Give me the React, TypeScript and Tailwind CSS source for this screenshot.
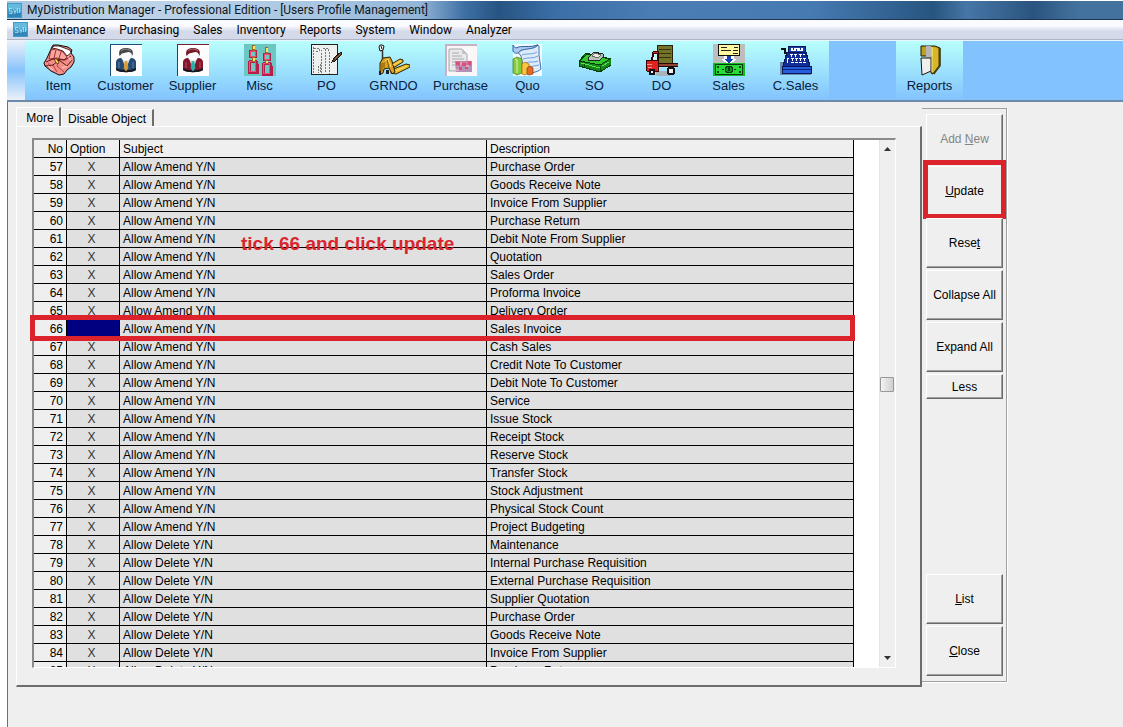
import type { ReactNode } from 'react'
import clsx from 'clsx'

// ── Data ───────────────────────────────────────────────────────────────────

const MENUS = ['Maintenance', 'Purchasing', 'Sales', 'Inventory', 'Reports', 'System', 'Window', 'Analyzer']

const AMEND = [
  'Purchase Order', 'Goods Receive Note', 'Invoice From Supplier', 'Purchase Return',
  'Debit Note From Supplier', 'Quotation', 'Sales Order', 'Proforma Invoice', 'Delivery Order',
  'Sales Invoice', 'Cash Sales', 'Credit Note To Customer', 'Debit Note To Customer', 'Service',
  'Issue Stock', 'Receipt Stock', 'Reserve Stock', 'Transfer Stock', 'Stock Adjustment',
  'Physical Stock Count', 'Project Budgeting',
]

const REMOVE = [
  'Maintenance', 'Internal Purchase Requisition', 'External Purchase Requisition',
  'Supplier Quotation', 'Purchase Order', 'Goods Receive Note', 'Invoice From Supplier',
  'Purchase Return',
]

const FIRST_NO = 57
const SELECTED_NO = 66

const ROWS = [
  ...AMEND.map((description) => ({ subject: 'Allow Amend Y/N', description })),
  ...REMOVE.map((description) => ({ subject: 'Allow Delete Y/N', description })),
].map((row, i) => ({ ...row, no: FIRST_NO + i }))

// ── Icons ──────────────────────────────────────────────────────────────────

function AppIcon() {
  return (
    <svg viewBox="0 0 15 15" className="h-[15px] w-[15px] shrink-0" aria-hidden="true">
      <rect width="15" height="15" fill="#3f9bc9" />
      <rect x="1" y="1" width="13" height="5" fill="#66bbdd" />
      <rect x="1" y="10" width="13" height="4" fill="#3186b8" />
      <path
        d="M5 5.500H2.500V8H5v2.500H2M6.500 6l1.500 3.500M9.500 6 7.500 11M10.500 5v5M12.500 5v5M12.500 7.500H14"
        fill="none"
        stroke="#c3e9f5"
        strokeWidth="0.7"
      />
    </svg>
  )
}

function Glyph({ children, crisp = true }: { children: ReactNode; crisp?: boolean }) {
  return (
    <svg
      viewBox="0 0 32 32"
      className="h-8 w-8 shrink-0"
      shapeRendering={crisp ? 'crispEdges' : 'auto'}
      aria-hidden="true"
    >
      {children}
    </svg>
  )
}

function ItemIcon() {
  return (
    <Glyph crisp={false}>
      <path
        d="M8 5 10 1h5l10 2 4 3-1 3 3 4v5l-3 5-4 3-3 4-5 1-8-4-6-5-1-3 3-5z"
        fill="#f38e88"
        stroke="#1a0808"
      />
      <path d="m9 4 2-2h5l11 4 1 3-4 3-4-5-6-2z" fill="#fff" stroke="#1a0808" strokeWidth="0.8" />
      <path d="m8 6 5-1 7 3 4 5-3 3-7-2-8 1z" fill="#f9a49c" stroke="#7a1d1d" strokeWidth="0.8" />
      <path d="m13 6-2 8M18 8l-2 6" fill="none" stroke="#a03030" />
      <path d="m3 18 7-3 12 1 6-4M2 22l8-1 6-5 8 6 5-6" fill="none" stroke="#5b1414" />
      <path d="m10 21 4 7M16 17l-2 5 7 6M6 19l-1 5" fill="none" stroke="#a03030" strokeWidth="0.8" />
      <path d="m11 15 3 5 2-1-2-4z" fill="#ffdc4a" stroke="#4d1b0b" strokeWidth="0.7" />
      <path d="m5 22 5 4M19 24l5-2M25 12l3 5" stroke="#ffd0ca" />
    </Glyph>
  )
}

function PersonIcon({ coat, tie, hair, edge }: { coat: string; tie: string; hair: string; edge: string }) {
  return (
    <Glyph crisp={false}>
      <rect width="32" height="32" fill="#fdfdfd" />
      <path d="M0 32V0h32" fill="none" stroke={edge} strokeWidth="2" />
      <path d="M6 26V18c0-2 2-4 5-4h10c3 0 5 2 5 4v8c-4 3-16 3-20 0z" fill={coat} />
      <path d="M6 24c5 3 15 3 20 0v2c-4 3-16 3-20 0z" fill="#16181f" />
      <path d="m12 14 4 12 4-12z" fill="#eee" />
      <path d="m15 17-1 7 2 3 2-3-1-7z" fill={tie} stroke={tie} strokeWidth="0.7" />
      <ellipse cx="16" cy="11" rx="5.500" ry="6" fill="#fafafa" stroke="#ccc" strokeWidth="0.5" />
      <path d="M9.500 12C8 6 11 4 16 4s8 2 6.500 8c-1-3-2-4-4-4-3 1-6 0-9 4z" fill={hair} />
      <path d="M11 7c3-3 8-2 10 0" fill="none" stroke="#aaa" strokeWidth="0.7" />
      <path d="M9 18v6M23 18v6" stroke="#fff" strokeOpacity="0.3" />
    </Glyph>
  )
}

function MiscIcon() {
  return (
    <Glyph>
      <rect width="32" height="32" fill="#6cc7c3" />
      <g fill="none">
        <path d="M6 7h6v6H6zM20 10h6v6h-6z" stroke="#a9204a" strokeWidth="2" />
        <path d="M6 7h5v5H6zM20 10h5v5h-5z" stroke="#ee4a78" />
        <path d="M6 17h6l1 3v8H5v-8zM20 19h6l1 3v8h-8v-8z" stroke="#b51f4a" strokeWidth="3" />
        <path d="M6 17h5v10H5v-8zM20 19h5v10h-6v-8z" stroke="#f04d7c" />
        <path d="M9.500 1v6M9.500 13v5M22.500 3v7M22.500 16v4" stroke="#9a6a14" strokeWidth="3" />
        <path d="M9.500 2v3M9.500 14v3M22.500 4v4M22.500 17v2" stroke="#ffe46e" strokeWidth="2" />
      </g>
    </Glyph>
  )
}

function OrderSheetIcon() {
  return (
    <Glyph>
      <path d="M0.500 0.500h26v30H0.500z" fill="#eeefef" stroke="#222" />
      <path
        d="M2.500 3v27M3 4h5v3h-4M10.500 9v20M10 7l3-3h3l2 3v23M9.500 20v9M7.500 22v7M14.500 5v24"
        fill="none"
        stroke="#777"
        strokeDasharray="2 1"
      />
      <path d="m21 18 2-4 7-6 1 2-7 7z" fill="#5c4030" stroke="#20150d" />
      <path d="m24 15 6-6" stroke="#8b6749" />
    </Glyph>
  )
}

function PalletJackIcon() {
  return (
    <Glyph crisp={false}>
      <path d="M2 1 1 3l1 4 3-1 1-4-2-1z" fill="#fff" stroke="#111" />
      <path d="M4 5 3 2" stroke="#111" />
      <path d="M4.500 6v13" stroke="#333" strokeWidth="1.500" />
      <path d="m12 21 10-6 3 1v2l-10 6z" fill="#efb92c" stroke="#2e2203" />
      <path d="m13 26 15-6 4 1v2L18 30l-5-1z" fill="#efb92c" stroke="#2e2203" />
      <path d="M2 28v-9l3-5 7-1 2 4 3 11-3 2-3-6-5 1-1 4-2 1z" fill="#dda020" stroke="#2e2203" />
      <path d="M6 16v8M9 15l2 9M4 19v8" fill="none" stroke="#7a5908" />
      <path d="m5 18 5-3 3 8M15 21l8-4M18 27l11-5" fill="none" stroke="#ffe168" />
      <path d="M1 27h2v4H1zM8 26h3v4H8z" fill="#222" />
    </Glyph>
  )
}

function PurchaseIcon() {
  return (
    <Glyph crisp={false}>
      <rect width="32" height="32" fill="#fbf7f9" />
      <path d="M1 32V1h31" fill="none" stroke="#cbb0c2" strokeWidth="2" />
      <path d="M4 5h13l5 5v17H4z" fill="#e9e9eb" stroke="#a5a5a9" />
      <path d="M17 5v5h5z" fill="#c4c4c8" />
      <path d="M7 9h7M7 12h10M7 15h12M7 18h5M7 21h4" stroke="#aaaab0" />
      <path d="M10 17h17v11H11z" fill="#c87c9f" />
      <path d="M11 22h16v6H11z" fill="#b492b7" />
      <path d="M11 18h4v3h-4zM17 19h4v3h-4zM23 17h3v4h-3zM14 23h3v3h-3zM20 23h3v2h-3z" fill="#d94f7c" />
      <path d="M15 18h2v3h-2zM21 21h3v2h-3zM11 25h3v2h-3z" fill="#dea5bd" />
    </Glyph>
  )
}

function QuoIcon() {
  return (
    <Glyph crisp={false}>
      <rect x="1" width="29" height="32" fill="#f2f9ff" />
      <path d="M5 7c2-3 15-3 20-6l2 1v9l2 14c-4 4-12 4-17 4L9 12z" fill="#dceafa" stroke="#4671a8" />
      <path d="M1 1v6c1 3 6 3 7 0 5-3 14-1 18-6C18 4 9 1 4 4 3 3 2 3 1 1z" fill="#a9c9ef" stroke="#2f629f" />
      <path d="M10 11c5-2 10 0 15-3M11 15c5-2 10 0 15-3M13 19c5-2 9 0 13-2M17 23l10-2" fill="none" stroke="#6fa2dc" />
      <path d="m1 15 4-2 5 2v14l-5 2-4-2z" fill="#83cc3b" stroke="#447d1f" strokeWidth="0.7" />
      <path d="m3 15 2 1v13" fill="none" stroke="#dcf5b8" />
      <path d="m10 20 3-2 4 2v9l-4 2-3-1z" fill="#f6c63d" stroke="#a9641a" strokeWidth="0.7" />
      <path d="m15 24 3-2 3 2v6l-4 1-2-1z" fill="#e56b25" stroke="#913710" strokeWidth="0.7" />
    </Glyph>
  )
}

function MoneyIcon() {
  return (
    <Glyph>
      <path d="m0 17 7-8 25 6v6l-11 7L0 22z" fill="#138a17" stroke="#063c07" />
      <path d="m1 17 7-7 23 5-10 6z" fill="#2fc82d" stroke="#063c07" />
      <path d="M21 22v5M5 18v5" stroke="#064b08" />
      <path d="m9 14 6-6 9 2v3l-4 4-11-1z" fill="#b9c2b6" stroke="#222" />
      <path d="m13 12 3-3 6 2-3 3z" fill="#e8ece6" stroke="#666d62" />
      <path d="m2 19 19 5M23 22l7-4" stroke="#58e153" />
    </Glyph>
  )
}

function TruckIcon() {
  return (
    <Glyph>
      <path d="M9 27h18l-3 5H11z" fill="#a8b4b8" />
      <path d="M11.500 1.500h15v18h-15z" fill="#74732a" stroke="#25250b" />
      <path d="M13 5.500h12M13 9.500h12M13 13.500h12" stroke="#34330e" />
      <path d="M11 19.500h21v3H11z" fill="#914434" stroke="#250a05" />
      <path d="M5.500 16 7 8l2-1h3v20H1l-1-3v-7z" fill="#dd2420" stroke="#360403" />
      <path d="m6 16 2-7h3v7z" fill="#c8f7f8" stroke="#360403" />
      <path d="M1 20.500h5M2 23.500h4" stroke="#ff928d" />
      <circle cx="6" cy="28" r="2.500" fill="#eee" stroke="#111" strokeWidth="2" />
      <circle cx="25" cy="27" r="3.500" fill="#eee" stroke="#111" strokeWidth="2" />
    </Glyph>
  )
}

function SalesIcon() {
  return (
    <Glyph>
      <rect width="32" height="32" fill="#bdbdbd" />
      <path d="M5.500 0.500h21v11h-21z" fill="#fff6a0" stroke="#111" />
      <path d="M8 3.500h6M21 3.500h4M8 6.500h10M20 6.500h5M20 9.500h5" stroke="#222" />
      <path d="M11 12h10v3h3l-8 6-8-6h3z" fill="#fff" />
      <path d="M14 12h4v3h3l-5 4-5-4h3z" fill="#183fb5" />
      <path d="M0 19h32v13H0z" fill="#12ba25" />
      <path d="M2.500 20.500h27v10h-27z" fill="#27dc34" stroke="#063c0b" />
      <circle cx="16" cy="25.500" r="3.500" fill="#11942a" stroke="#063c0b" />
      <path d="M15 23h2v4h-2zM4 22h2v2H4zM26 22h2v2h-2zM4 27h2v2H4zM26 27h2v2h-2zM9 25h2v1H9zM21 25h2v1h-2z" fill="#073e0a" />
    </Glyph>
  )
}

function TypewriterIcon() {
  return (
    <Glyph>
      <path d="M0 18h5v10h26v3H0z" fill="#6c8cae" />
      <path d="M1 4.500h4v4h4" fill="none" stroke="#111" strokeWidth="2" />
      <path d="M9 2h16l1 7H8z" fill="#1c3ca6" stroke="#08175a" />
      <path d="M11 4h12v3H11z" fill="#fff" />
      <path d="M13.500 4v2M16.500 5v2M20.500 4v2" stroke="#142d87" />
      <path d="M7 8h19l4 14H3z" fill="#122c98" stroke="#08175a" />
      <path
        d="M10 10.500h3M14 10.500h3M19 10.500h3M23 10.500h2M11.500 10v3M15.500 10v3M20.500 10v3M7 14.500h2M11 14.500h3M15 14.500h3M19 14.500h3M23 14.500h3M7.500 14v5M12.500 14v3M16.500 14v3M20.500 14v3M24.500 14v3M11 18.500h3M15 18.500h3M19 18.500h3M23 18.500h3"
        stroke="#fff"
      />
      <path d="M2.500 22.500h29v7h-29z" fill="#255ddb" stroke="#08175a" />
      <path d="M3 25.500h28" stroke="#0b2486" />
    </Glyph>
  )
}

function FolderIcon() {
  return (
    <Glyph crisp={false}>
      <path d="M7 2h14l5 2v18l-7 8-2-1V12H7z" fill="#c2a01d" stroke="#1b1705" />
      <path d="M12 2h5v12h-5z" fill="#b5b5b5" />
      <path d="M7 14h10v13l-9 4z" fill="#efefef" stroke="#1b1705" />
      <path d="m18 3 1 26 6-7V5z" fill="#d7b726" />
      <path d="M18 3v25" stroke="#fff4a0" />
      <path d="M25.500 4v18l-6 8" fill="none" stroke="#463a05" strokeWidth="2" />
    </Glyph>
  )
}

const TOOLS = [
  { label: 'Item', icon: <ItemIcon /> },
  { label: 'Customer', icon: <PersonIcon coat="#234b75" tie="#d99b35" hair="#464646" edge="#234c79" /> },
  { label: 'Supplier', icon: <PersonIcon coat="#86142b" tie="#25b3a9" hair="#7c1325" edge="#841b34" /> },
  { label: 'Misc', icon: <MiscIcon /> },
  { label: 'PO', icon: <OrderSheetIcon /> },
  { label: 'GRNDO', icon: <PalletJackIcon /> },
  { label: 'Purchase', icon: <PurchaseIcon /> },
  { label: 'Quo', icon: <QuoIcon /> },
  { label: 'SO', icon: <MoneyIcon /> },
  { label: 'DO', icon: <TruckIcon /> },
  { label: 'Sales', icon: <SalesIcon /> },
  { label: 'C.Sales', icon: <TypewriterIcon /> },
]

// ── Window chrome ──────────────────────────────────────────────────────────

function TitleBar() {
  return (
    <header className="mt-px flex h-[19px] shrink-0 items-center gap-[5px] border-b border-[#1d3550] bg-[linear-gradient(90deg,#a9c4df_0%,#bdd3e9_12%,#a9c6e2_28%,#93b5d7_37%,#3e70a5_41%,#275482_44%,#3a6ea6_49%,#4a7db3_58%,#467bb2_72%,#275580_83%,#4676a6_86%,#2a547f_92%,#44729f_96%,#44729f_100%)]">
      <AppIcon />
      <h1 className="whitespace-nowrap font-[Roboto,sans-serif] text-xs leading-4 text-[#101820]">
        MyDistribution Manager - Professional Edition - [Users Profile Management]
      </h1>
    </header>
  )
}

function MenuBar() {
  return (
    <nav
      className="flex h-[20px] shrink-0 items-center border-b border-[#aeb4c4] bg-linear-to-b from-[#fafbfe] from-30% to-[#d5daeb] to-60% pl-1.5"
      aria-label="Main menu"
    >
      <AppIcon />
      <div className="ml-2 flex gap-[14px]">
        {MENUS.map((menu) => (
          <button key={menu} type="button" className="font-[Roboto,sans-serif] text-xs leading-4">
            {menu}
          </button>
        ))}
      </div>
    </nav>
  )
}

function ToolButton({ label, icon }: { label: string; icon: ReactNode }) {
  return (
    <button
      type="button"
      className="flex w-[67px] shrink-0 flex-col items-center bg-linear-to-b from-[#b9fffb] to-[#82c3fe] pt-[3px]"
    >
      {icon}
      <span className="mt-0.5 text-[13px] leading-4 text-[#08203c]">{label}</span>
    </button>
  )
}

function Toolbar() {
  return (
    <div className="flex h-[62px] shrink-0 border-t border-b-2 border-t-[#e8f4ff] border-b-[#6d8ba8] bg-[#82c3fe]" role="toolbar">
      <div className="w-[18px] shrink-0 bg-linear-to-b from-[#eaf0f8] via-[#86c3fb] to-[#eaf0f8]" />
      {TOOLS.map((tool) => (
        <ToolButton key={tool.label} label={tool.label} icon={tool.icon} />
      ))}
      <div className="w-[67px] shrink-0" />
      <ToolButton label="Reports" icon={<FolderIcon />} />
    </div>
  )
}

// ── Option grid ────────────────────────────────────────────────────────────

function OptionTable() {
  const cell = 'h-[18px] border-r border-b border-black p-0 px-[3px] pt-px leading-4 font-normal'
  return (
    <table className="w-full table-fixed border-separate border-spacing-0 text-left text-xs whitespace-nowrap">
      <colgroup>
        <col className="w-[33px]" />
        <col className="w-[53px]" />
        <col />
        <col />
      </colgroup>
      <thead className="bg-[#efefef]">
        <tr>
          <th className={clsx(cell, 'text-right')}>No</th>
          <th className={cell}>Option</th>
          <th className={cell}>Subject</th>
          <th className={cell}>Description</th>
        </tr>
      </thead>
      <tbody className="bg-[#e0e0e0]">
        {ROWS.map((row) => (
          <tr key={row.no}>
            <td className={clsx(cell, 'bg-[#efefef] text-right')}>{row.no}</td>
            <td className={clsx(cell, 'pr-1.5 text-center text-[#333]', row.no === SELECTED_NO && 'bg-[#000080]')}>
              {row.no === SELECTED_NO ? '' : 'X'}
            </td>
            <td className={cell}>{row.subject}</td>
            <td className={cell}>{row.description}</td>
          </tr>
        ))}
      </tbody>
    </table>
  )
}

function ScrollTrack() {
  return (
    <div className="relative flex w-[16px] shrink-0 flex-col items-center justify-between border-l border-[#e3e3e3] bg-[#efefef] py-[7px]">
      <svg viewBox="0 0 7 4" className="h-1 w-[7px]" aria-hidden="true">
        <path d="M0 4 3.500 0 7 4z" fill="#333" />
      </svg>
      {/* Thumb */}
      <div className="absolute top-[45%] left-0 h-[15px] w-[14px] rounded-[1px] border border-[#979797] bg-linear-to-r from-[#f4f4f4] to-[#cfcfcf]" />
      <svg viewBox="0 0 7 4" className="h-1 w-[7px]" aria-hidden="true">
        <path d="M0 0h7L3.500 4z" fill="#333" />
      </svg>
    </div>
  )
}

function OptionGrid() {
  return (
    <div className="relative flex min-h-0 flex-1 border-t-2 border-r border-b border-l-2 border-t-[#8a8a8a] border-r-white border-b-white border-l-[#8a8a8a] bg-white">
      <div className="min-w-0 flex-1 overflow-hidden">
        <OptionTable />
      </div>
      <div className="w-[25px] shrink-0" />
      <ScrollTrack />
      {/* Annotations */}
      <p className="absolute top-[92px] left-[207px] text-[19px] leading-6 font-bold whitespace-nowrap text-[#d9252c]">
        tick 66 and click update
      </p>
      <div className="absolute top-[175px] right-10 -left-1 h-[26px] border-5 border-[#dc232b]" />
    </div>
  )
}

function TabbedPanel() {
  const tab = 'border-t border-l border-r-2 border-t-white border-l-white border-r-[#6d6d6d] pt-px text-xs leading-4'
  return (
    <div className="flex min-w-0 flex-1 flex-col">
      <div className="flex h-[19px] shrink-0 items-end" role="tablist">
        <button type="button" role="tab" aria-selected="true" className={clsx(tab, 'h-[19px] w-[45px] pl-1')}>
          More
        </button>
        <button type="button" role="tab" aria-selected="false" className={clsx(tab, 'h-[17px] w-[93px]')}>
          Disable Object
        </button>
      </div>
      <div className="flex min-h-0 flex-1 flex-col border-t border-r-2 border-b-2 border-l border-t-white border-r-[#6d6d6d] border-b-[#6d6d6d] border-l-white pt-[11px] pr-6 pb-[17px] pl-[15px]">
        <OptionGrid />
      </div>
    </div>
  )
}

// ── Action column ──────────────────────────────────────────────────────────

interface ActionButtonProps {
  children: ReactNode
  short?: boolean
  disabled?: boolean
  marked?: boolean
}

function ActionButton({ children, short, disabled, marked }: ActionButtonProps) {
  return (
    <button
      type="button"
      disabled={disabled}
      className={clsx(
        'relative w-full shrink-0 border border-t-white border-r-[#696969] border-b-[#696969] border-l-white text-xs whitespace-nowrap shadow-[inset_-1px_-1px_0_#a0a0a0]',
        short ? 'h-[25px]' : 'h-[50px]',
        disabled && 'text-[#858585]',
      )}
    >
      {children}
      {marked && <span className="absolute -inset-x-1 -top-[7px] -bottom-1 border-5 border-[#dc232b]" />}
    </button>
  )
}

function ActionColumn() {
  return (
    <aside className="mt-px mb-[5px] flex w-[85px] shrink-0 flex-col gap-0.5 border-t border-r border-b border-[#a0a0a0] py-[5px] pr-[3px] pl-1 shadow-[1px_1px_0_#fff]">
      <ActionButton disabled>Add <u>N</u>ew</ActionButton>
      <ActionButton marked><u>U</u>pdate</ActionButton>
      <ActionButton>Rese<u>t</u></ActionButton>
      <ActionButton>Collapse All</ActionButton>
      <ActionButton>Expand All</ActionButton>
      <ActionButton short>Less</ActionButton>
      <div className="flex-1" />
      <ActionButton><u>L</u>ist</ActionButton>
      <ActionButton><u>C</u>lose</ActionButton>
    </aside>
  )
}

// ── App ────────────────────────────────────────────────────────────────────

export default function App() {
  return (
    <div className="flex h-screen flex-col overflow-hidden bg-white pl-[7px] font-['Liberation_Sans',Arial,sans-serif] text-black">
      <TitleBar />
      <MenuBar />
      <Toolbar />
      <main className="flex min-h-0 flex-1 border-l border-[#6f6f6f] bg-[#efefef] pt-[5px] pr-[116px] pb-10 pl-2">
        <TabbedPanel />
        <ActionColumn />
      </main>
    </div>
  )
}
